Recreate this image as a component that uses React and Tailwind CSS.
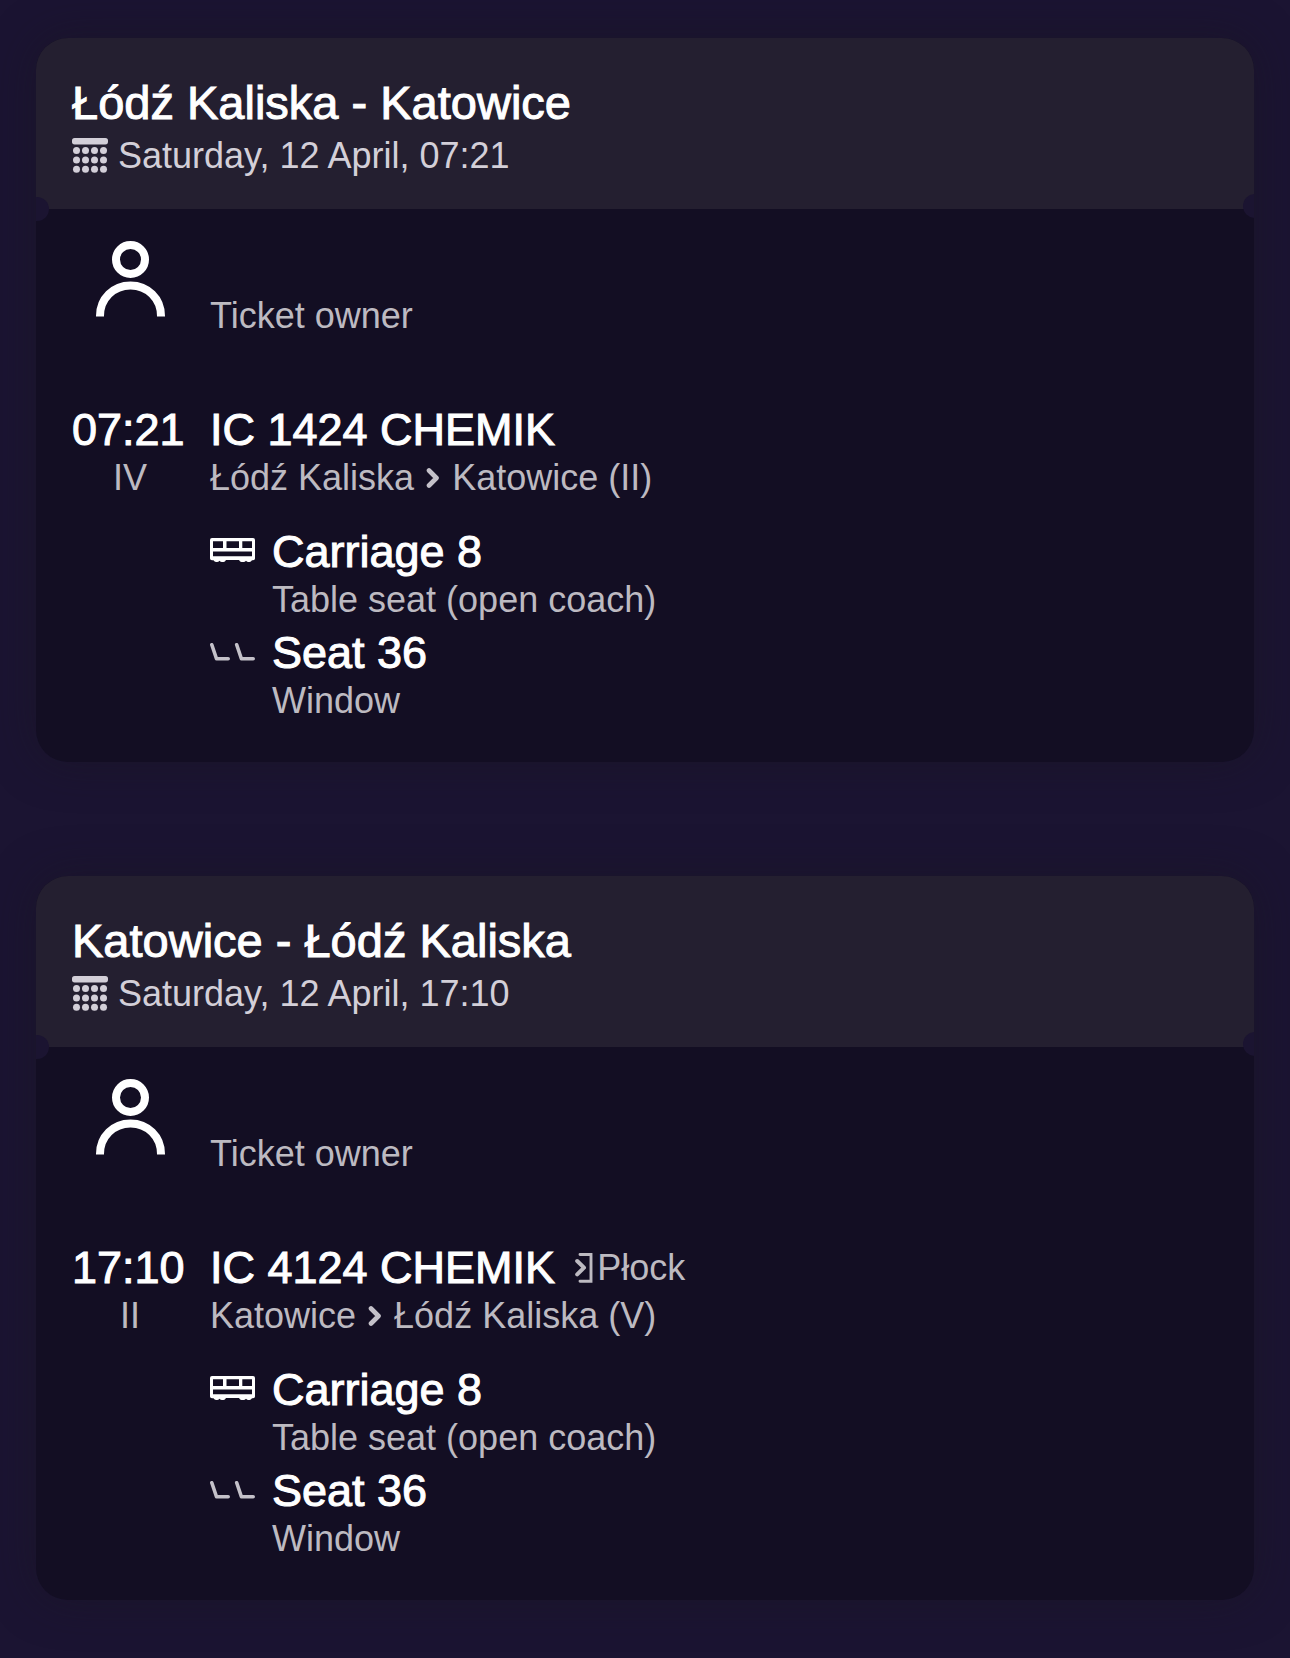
import React from 'react';

const trips = [
  {
    title: 'Łódź Kaliska - Katowice',
    date: 'Saturday, 12 April, 07:21',
    time: '07:21',
    platform: 'IV',
    train: 'IC 1424 CHEMIK',
    from: 'Łódź Kaliska',
    to: 'Katowice (II)',
    carriage: 'Carriage 8',
    carriageNote: 'Table seat (open coach)',
    seat: 'Seat 36',
    seatNote: 'Window',
  },
  {
    title: 'Katowice - Łódź Kaliska',
    date: 'Saturday, 12 April, 17:10',
    time: '17:10',
    platform: 'II',
    train: 'IC 4124 CHEMIK',
    destination: 'Płock',
    from: 'Katowice',
    to: 'Łódź Kaliska (V)',
    carriage: 'Carriage 8',
    carriageNote: 'Table seat (open coach)',
    seat: 'Seat 36',
    seatNote: 'Window',
  },
];

const medium = 'leading-[52px] text-white [-webkit-text-stroke:1px_white] whitespace-nowrap';
const strong = 'text-[45px] ' + medium;
const soft = 'text-[36px] leading-[44px] text-[#bdbac1] whitespace-nowrap';

function CalendarIcon() {
  return (
    <svg width="36" height="36" viewBox="0 0 36 36" fill="#d3cfd8" className="shrink-0" aria-hidden="true">
      <rect x="0" y="0" width="36" height="6.4" rx="2.6" />
      {[12.6, 21.9, 31.2].map((cy) =>
        [4.5, 13.5, 22.5, 31.5].map((cx) => <circle key={cx + '-' + cy} cx={cx} cy={cy} r="3.5" />)
      )}
    </svg>
  );
}

function PersonIcon() {
  return (
    <svg width="70" height="76" viewBox="0 0 70 76" fill="none" stroke="#fff" strokeWidth="8" aria-hidden="true">
      <circle cx="35.500" cy="18.5" r="14.5" />
      <path d="M5 75.500 V75 C5 57.500 18.500 44.500 35.500 44.500 S66 57.500 66 75 V75.500" />
    </svg>
  );
}

function CarriageIcon() {
  return (
    <svg width="45" height="24" viewBox="0 0 45 24" className="shrink-0" aria-hidden="true">
      <path
        fill="#fff"
        fillRule="evenodd"
        d="M2 0H43Q45 0 45 2V20.500Q45 22.300 43 22.300H42Q41 24 39.500 24H38.500Q37 24 36 22.700Q35 24 33.500 24H31.500Q30 24 29 22H16Q15 24 13.500 24H12Q10.500 24 9.500 22.700Q8.500 24 7 24H6Q4.500 24 3.500 22.300H2Q0 22.300 0 20.500V2Q0 0 2 0Z
           M3 3.300V10H13V3.300Z M16.500 3.300V10H29V3.300Z M32.300 3.300V10H42V3.300Z M3 13.500V18.200H42V13.500Z"
      />
    </svg>
  );
}

function SeatsIcon() {
  return (
    <svg
      width="45"
      height="18"
      viewBox="0 0 45 18"
      fill="none"
      stroke="#c4c1c9"
      strokeWidth="3.6"
      strokeLinecap="round"
      strokeLinejoin="round"
      className="shrink-0"
      aria-hidden="true"
    >
      <path d="M1.800 1.800 L6.500 15.800 H18.200" />
      <path d="M26.700 1.800 L31.400 15.800 H43.200" />
    </svg>
  );
}

function Chevron() {
  return (
    <svg
      width="14"
      height="20"
      viewBox="0 0 14 20"
      fill="none"
      stroke="#c4c1c9"
      strokeWidth="4.6"
      strokeLinecap="round"
      strokeLinejoin="round"
      aria-label="to"
      role="img"
    >
      <path d="M3 2.500 L10.500 10 L3 17.500" />
    </svg>
  );
}

function ExitIcon() {
  return (
    <svg
      width="18"
      height="30"
      viewBox="0 0 18 30"
      fill="none"
      stroke="#bdbac1"
      strokeLinecap="round"
      aria-hidden="true"
    >
      <path strokeWidth="2.900" strokeLinejoin="miter" d="M5 1.500 H16 V28.300 H5" />
      <path strokeWidth="4" strokeLinejoin="round" d="M2.200 8 L9 14.700 L2.200 21.400" />
    </svg>
  );
}

function Ticket({ trip }) {
  return (
    <article className="relative overflow-hidden rounded-[32px] bg-[#130e23]">
      <header className="bg-[#241f30] px-9 pt-[39px] pb-[29px]">
        <h2 className={'text-[47px] ' + medium}>{trip.title}</h2>
        <div className="mt-[3px] flex items-center gap-2.5">
          <CalendarIcon />
          <time className="text-[36px] leading-[48px] whitespace-nowrap text-[#d3cfd8]">{trip.date}</time>
        </div>
      </header>
      <span className="absolute top-[159px] -left-[11px] size-6 rounded-full bg-[#1b1431]" />
      <span className="absolute top-[156px] -right-[13px] size-6 rounded-full bg-[#1b1431]" />

      <div className="grid grid-cols-[116px_1fr] gap-x-[22px] px-9 pt-8 pb-[39px]">
        <div className="flex justify-center">
          <PersonIcon />
        </div>
        <div className="pt-[53px]">
          <p className={soft}>Ticket owner</p>
        </div>

        <div className="mt-[66px]">
          <p className={strong}>{trip.time}</p>
          <p className={soft + ' text-center'}>{trip.platform}</p>
        </div>
        <div className="mt-[66px]">
          <div className="flex items-center gap-5">
            <h3 className={strong}>{trip.train}</h3>
            {trip.destination && (
              <span className="flex items-center gap-1">
                <ExitIcon />
                <span className={soft}>{trip.destination}</span>
              </span>
            )}
          </div>
          <p className={soft + ' flex items-center gap-3'}>
            {trip.from}
            <Chevron />
            {trip.to}
          </p>

          <dl className="mt-[26px] grid grid-cols-[45px_1fr] gap-x-[17px] gap-y-[5px]">
            <dt className="pt-3">
              <CarriageIcon />
            </dt>
            <dd>
              <p className={strong}>{trip.carriage}</p>
              <p className={soft}>{trip.carriageNote}</p>
            </dd>
            <dt className="pt-4">
              <SeatsIcon />
            </dt>
            <dd>
              <p className={strong}>{trip.seat}</p>
              <p className={soft}>{trip.seatNote}</p>
            </dd>
          </dl>
        </div>
      </div>
    </article>
  );
}

export default function App() {
  return (
    <main className="min-h-screen bg-[#1b1432] px-9 pt-[38px] pb-[58px] font-['Liberation_Sans',Arial,sans-serif]">
      <div className="flex flex-col gap-[114px]">
        {trips.map((trip) => (
          <div key={trip.time} className="rounded-[32px] shadow-[0_0_44px_rgba(26,22,32,0.5)]">
            <Ticket trip={trip} />
          </div>
        ))}
      </div>
    </main>
  );
}
